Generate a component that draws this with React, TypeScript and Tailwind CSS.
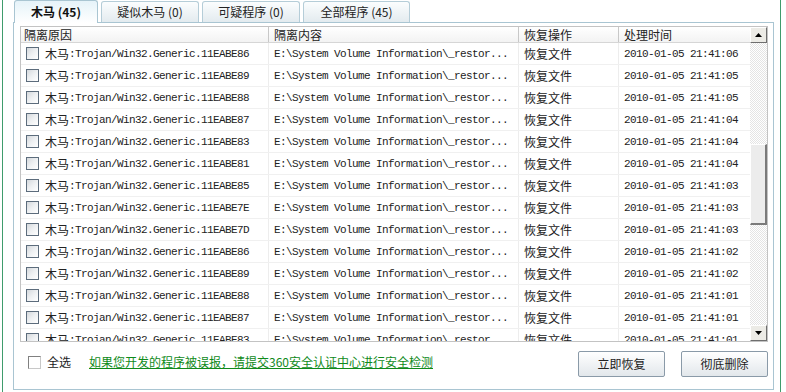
import { ReactNode } from 'react';

const ROWS: [string, string][] = [
  ['11EABE86', '21:41:06'],
  ['11EABE89', '21:41:05'],
  ['11EABE88', '21:41:05'],
  ['11EABE87', '21:41:04'],
  ['11EABE83', '21:41:04'],
  ['11EABE81', '21:41:04'],
  ['11EABE85', '21:41:03'],
  ['11EABE7E', '21:41:03'],
  ['11EABE7D', '21:41:03'],
  ['11EABE86', '21:41:02'],
  ['11EABE89', '21:41:02'],
  ['11EABE88', '21:41:01'],
  ['11EABE87', '21:41:01'],
  ['11EABE83', '21:41:01'],
];

const CJK = "font-['Noto_Sans_CJK_SC',sans-serif] text-[12px] leading-[14px]";
const MONO = "font-['Liberation_Mono','Noto_Sans_CJK_SC',monospace] text-[11px] tracking-[-0.6px] leading-[14px]";

function Tab({ active, children, w }: { active?: boolean; children: ReactNode; w: string }) {
  return (
    <div
      className={
        active
          ? `${w} relative z-10 -mb-px h-[23px] flex items-center justify-center rounded-t-[3px] border border-b-0 border-[#a9c5d2] bg-gradient-to-b from-[#e6f3f9] to-white font-bold text-[#111]`
          : `${w} h-[21px] flex items-center justify-center rounded-t-[3px] border border-b-0 border-[#b5cdd8] bg-gradient-to-b from-[#fbfdfe] to-[#e3ebef] text-[#222]`
      }
    >
      <span className={CJK}>{children}</span>
    </div>
  );
}

function RowCheck() {
  return (
    <span className="w-[13px] h-[13px] shrink-0 border border-[#5c6c7c] bg-gradient-to-br from-[#d4d8dc] via-[#eef0f2] to-white" />
  );
}

function ArrowBtn({ up }: { up?: boolean }) {
  return (
    <div className="h-[16px] w-[17px] flex items-center justify-center bg-[#ecebe6] border-t border-l border-t-white border-l-white border-r border-b border-r-[#6e6e6e] border-b-[#6e6e6e]">
      <svg width="7" height="4" viewBox="0 0 7 4">
        {up ? <polygon points="3.5,0 7,4 0,4" fill="#000" /> : <polygon points="0,0 7,0 3.5,4" fill="#000" />}
      </svg>
    </div>
  );
}

export default function App() {
  return (
    <div className="w-[786px] h-[392px] bg-white flex text-[#222] overflow-hidden">
      <div className="w-[2px]" />
      <div className="w-[1px] bg-[#3f9c6c]" />
      <div className="w-[10px]" />

      {/* main panel */}
      <div className="w-[761px] flex flex-col">
        {/* tabs */}
        <div className="h-[22px] flex items-end gap-[3px] pl-[1px]">
          <Tab active w="w-[84px]">木马 (45)</Tab>
          <Tab w="w-[98px]">疑似木马 (0)</Tab>
          <Tab w="w-[98px]">可疑程序 (0)</Tab>
          <Tab w="w-[107px]">全部程序 (45)</Tab>
        </div>

        <div className="h-[368px] border border-[#a9c5d2] pt-[3px] pl-[6px] pr-[5px] flex flex-col">
          {/* table */}
          <div className="h-[316px] w-[748px] border border-[#c3c3c3] flex">
            <div className="flex-1 flex flex-col overflow-hidden">
              <div className="h-[16px] shrink-0 flex border-b border-[#d6d6d6] bg-gradient-to-b from-white to-[#f3f3f3]">
                <div className={`w-[248px] pl-[3px] border-r border-[#c8c8c8] flex items-center ${CJK}`}>隔离原因</div>
                <div className={`w-[250px] pl-[5px] border-r border-[#c8c8c8] flex items-center ${CJK}`}>隔离内容</div>
                <div className={`w-[100px] pl-[5px] border-r border-[#c8c8c8] flex items-center ${CJK}`}>恢复操作</div>
                <div className={`flex-1 pl-[5px] flex items-center ${CJK}`}>处理时间</div>
              </div>
              {ROWS.map(([id, t], i) => (
                <div key={i} className="h-[22px] shrink-0 flex border-b border-[#f0f0f0]">
                  <div className="w-[248px] pl-[5px] gap-[6px] border-r border-[#ededed] flex items-center">
                    <RowCheck />
                    <span className="flex items-center">
                      <span className={CJK}>木马</span>
                      <span className={MONO}>:Trojan/Win32.Generic.{id}</span>
                    </span>
                  </div>
                  <div className={`w-[250px] pl-[5px] border-r border-[#ededed] flex items-center ${MONO}`}>
                    E:\System Volume Information\_restor...
                  </div>
                  <div className={`w-[100px] pl-[5px] border-r border-[#ededed] flex items-center ${CJK}`}>恢复文件</div>
                  <div className={`flex-1 pl-[5px] flex items-center ${MONO}`}>2010-01-05 {t}</div>
                </div>
              ))}
            </div>

            {/* scrollbar */}
            <div className="w-[17px] flex flex-col">
              <ArrowBtn up />
              <div className="flex-1 pt-[101px] bg-[repeating-conic-gradient(#e4e4e4_0_25%,#ffffff_0_50%)] bg-[length:2px_2px]">
                <div className="h-[81px] w-[17px] bg-[#ececec] border-t border-l border-t-white border-l-white border-r-2 border-b-2 border-r-[#7a7a7a] border-b-[#7a7a7a]" />
              </div>
              <ArrowBtn />
            </div>
          </div>

          {/* bottom bar */}
          <div className="flex-1 flex items-start justify-between">
            <div className="flex items-center pl-[8px] pt-[13px]">
              <span className="w-[13px] h-[13px] border border-t-[#808080] border-l-[#808080] border-r-[#c8c8c8] border-b-[#c8c8c8] bg-white" />
              <span className={`ml-[6px] ${CJK}`}>全选</span>
              <a className={`ml-[18px] text-[#0f8a1a] underline ${CJK}`}>
                如果您开发的程序被误报，请提交360安全认证中心进行安全检测
              </a>
            </div>
            <div className="flex gap-[16px] pt-[9px]">
              <button className={`w-[87px] h-[26px] rounded-[2px] border border-[#8a9aa8] bg-gradient-to-b from-white to-[#e2e7eb] ${CJK}`}>
                立即恢复
              </button>
              <button className={`w-[87px] h-[26px] rounded-[2px] border border-[#8a9aa8] bg-gradient-to-b from-white to-[#e2e7eb] ${CJK}`}>
                彻底删除
              </button>
            </div>
          </div>
        </div>
      </div>

      <div className="w-[6px]" />
      <div className="w-[1px] bg-[#3f9c6c]" />
    </div>
  );
}
